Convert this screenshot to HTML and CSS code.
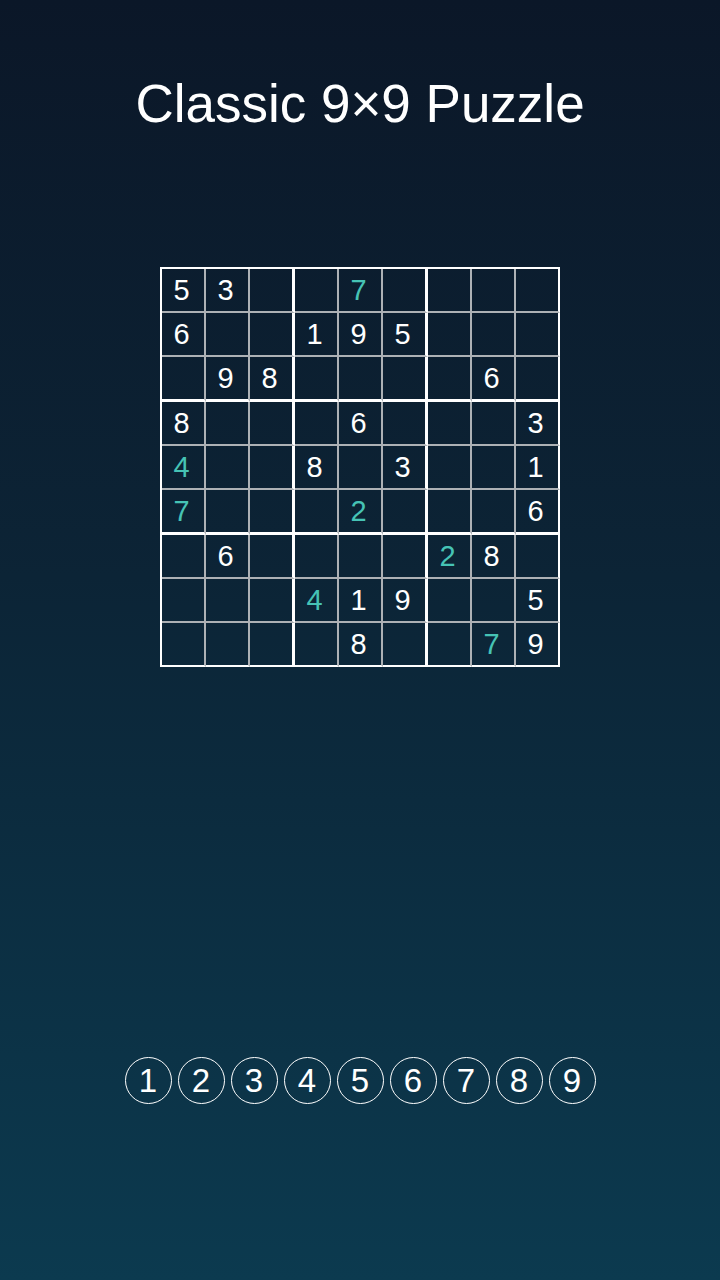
FILE: index.html
```html
<!DOCTYPE html>
<html lang="en">

<head>
    <meta charset="UTF-8">
    <meta name="viewport" content="width=device-width, initial-scale=1.0">
    <title>Sudoku</title>
    <link rel="stylesheet" href="styles.css">
</head>

<body>
    <div class="page">
        <h1 class="title">Classic 9×9 Puzzle</h1>

        <!--棋盘-->
        <div class="board">
            <div class="cell">5</div><div class="cell">3</div><div class="cell"></div><div class="cell"></div><div class="cell hint">7</div><div class="cell"></div><div class="cell"></div><div class="cell"></div><div class="cell"></div>
            <div class="cell">6</div><div class="cell"></div><div class="cell"></div><div class="cell">1</div><div class="cell">9</div><div class="cell">5</div><div class="cell"></div><div class="cell"></div><div class="cell"></div>
            <div class="cell"></div><div class="cell">9</div><div class="cell">8</div><div class="cell"></div><div class="cell"></div><div class="cell"></div><div class="cell"></div><div class="cell">6</div><div class="cell"></div>
            <div class="cell">8</div><div class="cell"></div><div class="cell"></div><div class="cell"></div><div class="cell">6</div><div class="cell"></div><div class="cell"></div><div class="cell"></div><div class="cell">3</div>
            <div class="cell hint">4</div><div class="cell"></div><div class="cell"></div><div class="cell">8</div><div class="cell"></div><div class="cell">3</div><div class="cell"></div><div class="cell"></div><div class="cell">1</div>
            <div class="cell hint">7</div><div class="cell"></div><div class="cell"></div><div class="cell"></div><div class="cell hint">2</div><div class="cell"></div><div class="cell"></div><div class="cell"></div><div class="cell">6</div>
            <div class="cell"></div><div class="cell">6</div><div class="cell"></div><div class="cell"></div><div class="cell"></div><div class="cell"></div><div class="cell hint">2</div><div class="cell">8</div><div class="cell"></div>
            <div class="cell"></div><div class="cell"></div><div class="cell"></div><div class="cell hint">4</div><div class="cell">1</div><div class="cell">9</div><div class="cell"></div><div class="cell"></div><div class="cell">5</div>
            <div class="cell"></div><div class="cell"></div><div class="cell"></div><div class="cell"></div><div class="cell">8</div><div class="cell"></div><div class="cell"></div><div class="cell hint">7</div><div class="cell">9</div>
        </div>

        <!--数字键-->
        <div class="keys">
            <span class="key">1</span>
            <span class="key">2</span>
            <span class="key">3</span>
            <span class="key">4</span>
            <span class="key">5</span>
            <span class="key">6</span>
            <span class="key">7</span>
            <span class="key">8</span>
            <span class="key">9</span>
        </div>
    </div>
</body>

</html>
```

FILE: styles.css
```css
* {
    margin: 0;
    padding: 0
}

html,
body {
    height: 100%;
}

body {
    background: linear-gradient(180deg, #0b1728 0%, #0c2436 45%, #0c3a4f 100%);
    color: #fff;
    font-family: "Liberation Sans", Arial, sans-serif;
}

.page {
    height: 1280px;
    display: flex;
    flex-direction: column;
    align-items: center;
}

.title {
    margin-top: 74px;
    font-size: 53px;
    font-weight: normal;
    line-height: 60px;
}

.board {
    margin-top: 133px;
    display: grid;
    grid-template-columns: repeat(9, auto);
    border-left: 2px solid #fff;
    border-top: 2px solid #fff;
}

.cell {
    width: 39px;
    height: 42px;
    padding-right: 3px;
    border-right: 2px solid #adb1b5;
    border-bottom: 2px solid #adb1b5;
    display: flex;
    align-items: center;
    justify-content: center;
    font-size: 29px;
    color: #fff;
}

/* 粗线: 第3、6列 */
.cell:nth-child(9n+3),
.cell:nth-child(9n+6) {
    border-right: 3px solid #fff;
}

.cell:nth-child(9n) {
    border-right-color: #fff;
}

/* 粗线: 第3、6行 */
.cell:nth-child(n+19):nth-child(-n+27),
.cell:nth-child(n+46):nth-child(-n+54) {
    border-bottom: 3px solid #fff;
}

.cell:nth-child(n+73) {
    border-bottom-color: #fff;
}

.cell.hint {
    color: #46c3b5;
}

.keys {
    margin-top: 390px;
    display: flex;
    gap: 6px;
}

.key {
    width: 47px;
    height: 47px;
    box-sizing: border-box;
    border: 1.3px solid #fff;
    border-radius: 50%;
    display: flex;
    align-items: center;
    justify-content: center;
    font-size: 33px;
    line-height: 1;
    cursor: pointer;
}
```
